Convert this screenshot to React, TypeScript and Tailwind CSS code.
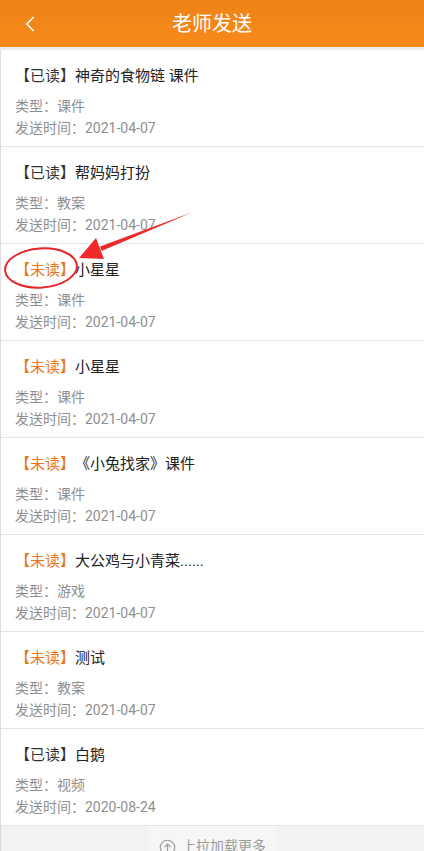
import { ChevronLeft } from "lucide-react";

interface Item {
  read: boolean;
  title: string;
  type: string;
  date: string;
}

const items: Item[] = [
  { read: true, title: "神奇的食物链 课件", type: "课件", date: "2021-04-07" },
  { read: true, title: "帮妈妈打扮", type: "教案", date: "2021-04-07" },
  { read: false, title: "小星星", type: "课件", date: "2021-04-07" },
  { read: false, title: "小星星", type: "课件", date: "2021-04-07" },
  { read: false, title: "《小兔找家》课件", type: "课件", date: "2021-04-07" },
  { read: false, title: "大公鸡与小青菜......", type: "游戏", date: "2021-04-07" },
  { read: false, title: "测试", type: "教案", date: "2021-04-07" },
  { read: true, title: "白鹅", type: "视频", date: "2020-08-24" },
];

function Row({ read, title, type, date }: Item) {
  return (
    <div className="h-[97px] border-b border-[#e4e4e4] pl-[14px] pt-[16px]">
      <div className="flex text-[15px] leading-[20px]">
        <span className={read ? "text-[#333]" : "text-[#e8761c]"}>
          {read ? "【已读】" : "【未读】"}
        </span>
        <span className="text-[#222]">{title}</span>
      </div>
      <div className="mt-[9px] text-[14px] leading-[22px] text-[#8f8f8f]">
        <div>类型：{type}</div>
        <div>发送时间：{date}</div>
      </div>
    </div>
  );
}

export default function App() {
  return (
    <div
      className="relative h-[851px] w-[424px] overflow-hidden bg-white"
      style={{ fontFamily: 'Roboto, "Noto Sans CJK SC", sans-serif' }}
    >
      <header className="relative flex h-[47px] items-center justify-center bg-gradient-to-b from-[#ef8217] to-[#f88a1b]">
        <ChevronLeft
          className="absolute left-[17px] top-[11px] text-white"
          size={26}
          strokeWidth={1.6}
        />
        <h1 className="text-[20px] text-white">老师发送</h1>
      </header>
      <div className="h-[3px] bg-[#ececec]" />

      <div className="border-l border-[#dcdcdc]">
        {items.map((it, i) => (
          <Row key={i} {...it} />
        ))}
        <div className="flex h-[40px] justify-center bg-[#f2f2f2]">
          <div className="flex w-[127px] items-start justify-center gap-[6px] bg-[#f6f6f6] pt-[10px] text-[14px] leading-[20px] text-[#9a9a9a]">
            <svg width="17" height="17" viewBox="0 0 20 20" className="mt-[3px]">
              <circle cx="10" cy="10" r="8.5" fill="none" stroke="#9a9a9a" strokeWidth="1.4" />
              <path d="M10 14.5V6M6.5 9.5L10 6l3.5 3.5" fill="none" stroke="#9a9a9a" strokeWidth="1.4" />
            </svg>
            <span>上拉加载更多</span>
          </div>
        </div>
      </div>

      <svg
        className="pointer-events-none absolute left-0 top-0"
        width="424"
        height="851"
        viewBox="0 0 424 851"
      >
        <ellipse
          cx="41"
          cy="268"
          rx="36"
          ry="19.5"
          fill="none"
          stroke="#e8262a"
          strokeWidth="2"
          transform="rotate(-4 41 268)"
        />
        <polygon points="193,212 100,246.5 101.5,251" fill="#ee2a2a" />
        <polygon points="79,258 96,238 104,259" fill="#ee2a2a" />
      </svg>
    </div>
  );
}
